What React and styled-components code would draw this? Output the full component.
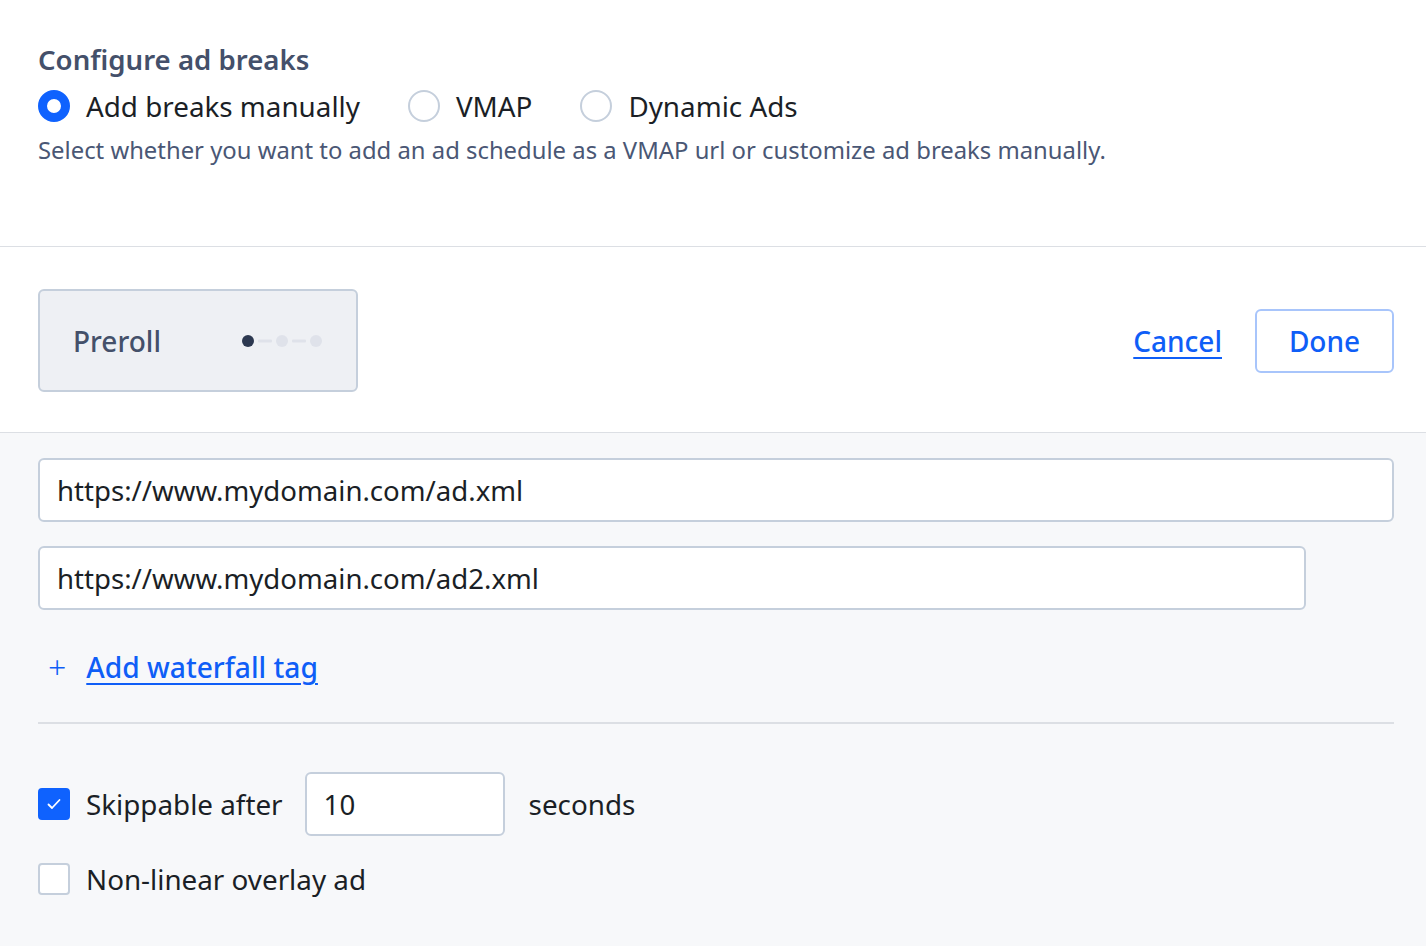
import React from 'react';
import styled, { createGlobalStyle } from 'styled-components';

const GlobalStyle = createGlobalStyle`
  body {
    margin: 0;
    background: #ffffff;
    font-family: "Noto Sans", "Open Sans", sans-serif;
    color: #1b1f26;
  }
`;

const Page = styled.div`
  width: 1426px;
  min-height: 946px;
  background: #f7f8fa;
`;

const TopSection = styled.section`
  background: #ffffff;
  padding: 40px 38px 80px;
  border-bottom: 1px solid #dcdfe4;
`;

const Title = styled.h2`
  margin: 0;
  font-size: 27.6px;
  line-height: 38px;
  font-weight: 600;
  color: #44506a;
`;

const RadioRow = styled.div`
  display: flex;
  align-items: center;
  height: 32px;
  margin-top: 12px;
`;

const RadioOption = styled.label`
  display: flex;
  align-items: center;
  gap: 16px;
  margin-right: 48px;
  font-size: 27.8px;
  line-height: 32px;
  color: #1b1f26;
`;

const RadioDot = styled.span`
  box-sizing: border-box;
  width: 32px;
  height: 32px;
  border-radius: 50%;
  background: #ffffff;
  border: ${p => (p.$checked ? '9px solid #0f62fe' : '2px solid #c5cfdc')};
`;

const Description = styled.p`
  margin: 12px 0 0;
  font-size: 23.85px;
  line-height: 32px;
  color: #4a5775;
`;

const BreakHeader = styled.section`
  background: #ffffff;
  display: flex;
  align-items: center;
  justify-content: space-between;
  padding: 42px 32px 40px 38px;
  border-bottom: 1px solid #dcdfe4;
`;

const BreakCard = styled.div`
  box-sizing: border-box;
  width: 320px;
  height: 103px;
  display: flex;
  align-items: center;
  padding: 0 33px 0 33px;
  justify-content: space-between;
  background: #eef0f4;
  border: 2px solid #c5cfdc;
  border-radius: 6px;
`;

const CardLabel = styled.span`
  font-size: 28px;
  font-weight: 500;
  color: #44506a;
`;

const Actions = styled.div`
  display: flex;
  align-items: center;
  gap: 33px;
`;

const LinkButton = styled.a`
  font-size: 28px;
  font-weight: 500;
  color: #0f5ef7;
  text-decoration: underline;
  text-underline-offset: 5px;
  text-decoration-thickness: 2px;
  cursor: pointer;
`;

const OutlineButton = styled.button`
  box-sizing: border-box;
  width: 139px;
  height: 64px;
  background: #ffffff;
  border: 2px solid #a8c5fb;
  border-radius: 6px;
  font-family: inherit;
  font-size: 28px;
  font-weight: 500;
  color: #0f5ef7;
`;

const Body = styled.section`
  padding: 25px 32px 40px 38px;
`;

const TextInput = styled.input`
  box-sizing: border-box;
  display: block;
  width: ${p => p.$width || '100%'};
  height: 64px;
  padding: 0 17px;
  border: 2px solid #c5cfdc;
  border-radius: 6px;
  background: #ffffff;
  font-family: inherit;
  font-size: 27.6px;
  color: #1b1f26;
  & + & {
    margin-top: 24px;
  }
`;

const AddRow = styled.div`
  display: flex;
  align-items: center;
  gap: 20px;
  height: 40px;
  margin-top: 37px;
  padding-left: 10px;
  font-size: 28px;
  color: #0f5ef7;
`;

const Plus = styled.span`
  font-size: 32px;
  font-weight: 300;
  line-height: 1;
`;

const AddLink = styled.a`
  font-size: 28.2px;
  font-weight: 500;
  text-decoration: underline;
  text-underline-offset: 5px;
  text-decoration-thickness: 2px;
  cursor: pointer;
`;

const Divider = styled.hr`
  margin: 35px 0 0;
  border: 0;
  border-top: 2px solid #dcdfe4;
`;

const CheckRow = styled.label`
  display: flex;
  align-items: center;
  gap: 16px;
  margin-top: ${p => p.$top};
  font-size: 27.8px;
  color: #1b1f26;
`;

const Box = styled.span`
  box-sizing: border-box;
  width: 32px;
  height: 32px;
  flex: none;
  display: flex;
  align-items: center;
  justify-content: center;
  border-radius: 4px;
  background: ${p => (p.$checked ? '#0f62fe' : '#ffffff')};
  border: 2px solid ${p => (p.$checked ? '#0f62fe' : '#c5cfdc')};
`;

const SmallInput = styled(TextInput)`
  width: 200px;
  margin: 0 8px 0 6px;
  padding: 0 17px;
`;

const Steps = () => (
  <svg width="82" height="14" viewBox="0 0 82 14">
    <circle cx="7" cy="7" r="6" fill="#2c3850" />
    <rect x="17" y="5.5" width="14" height="3" rx="1" fill="#dfe2ea" />
    <circle cx="41" cy="7" r="6" fill="#dfe2ea" />
    <rect x="51" y="5.5" width="14" height="3" rx="1" fill="#dfe2ea" />
    <circle cx="75" cy="7" r="6" fill="#dfe2ea" />
  </svg>
);

const Check = () => (
  <svg width="18" height="18" viewBox="0 0 18 18">
    <path d="M3.5 9.5l3.5 3.5 7.5-8" stroke="#fff" strokeWidth="1.8" fill="none" strokeLinecap="round" strokeLinejoin="round" />
  </svg>
);

export default function App() {
  return (
    <Page>
      <GlobalStyle />
      <TopSection>
        <Title>Configure ad breaks</Title>
        <RadioRow>
          <RadioOption><RadioDot $checked />Add breaks manually</RadioOption>
          <RadioOption><RadioDot />VMAP</RadioOption>
          <RadioOption><RadioDot />Dynamic Ads</RadioOption>
        </RadioRow>
        <Description>
          Select whether you want to add an ad schedule as a VMAP url or customize ad breaks manually.
        </Description>
      </TopSection>
      <BreakHeader>
        <BreakCard>
          <CardLabel>Preroll</CardLabel>
          <Steps />
        </BreakCard>
        <Actions>
          <LinkButton>Cancel</LinkButton>
          <OutlineButton>Done</OutlineButton>
        </Actions>
      </BreakHeader>
      <Body>
        <TextInput defaultValue="https://www.mydomain.com/ad.xml" />
        <TextInput $width="1268px" defaultValue="https://www.mydomain.com/ad2.xml" />
        <AddRow>
          <Plus>+</Plus>
          <AddLink>Add waterfall tag</AddLink>
        </AddRow>
        <Divider />
        <CheckRow $top="48px">
          <Box $checked><Check /></Box>
          Skippable after
          <SmallInput defaultValue="10" />
          seconds
        </CheckRow>
        <CheckRow $top="24px">
          <Box />
          Non-linear overlay ad
        </CheckRow>
      </Body>
    </Page>
  );
}
